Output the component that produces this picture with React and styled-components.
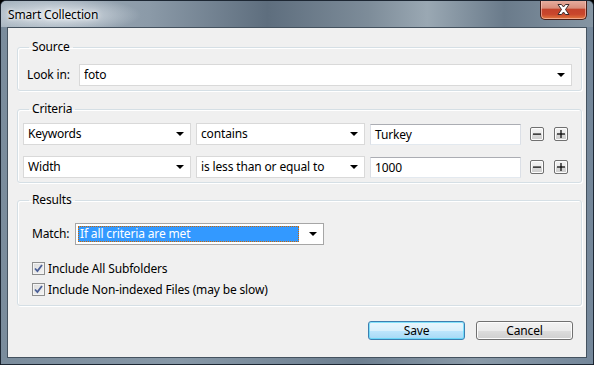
import React from "react";
import styled, { createGlobalStyle, css } from "styled-components";

const Global = createGlobalStyle`
  html, body { margin: 0; padding: 0; background: #000; }
  body { font-family: "Noto Sans", "Open Sans", sans-serif; font-size: 12px; letter-spacing: -0.15px; color: #000; }
  * { box-sizing: border-box; }
`;

const Window = styled.div`
  width: 594px;
  height: 365px;
  border: 1px solid #1d2733;
  border-radius: 6px 6px 0 0;
  background: linear-gradient(90deg, #7a8c9c 0%, #8798a7 30%, #6d7f90 60%, #8a9aa8 80%, #74879a 100%);
  display: flex;
  flex-direction: column;
  overflow: hidden;
`;

const TitleBar = styled.div`
  height: 26px;
  display: flex;
  align-items: flex-start;
  padding-left: 7px;
  padding-right: 6px;
  background:
    radial-gradient(ellipse 80px 18px at 60px 14px, rgba(235,240,245,0.85), rgba(235,240,245,0) 100%),
    linear-gradient(90deg, #a9b6c1 0%, #8b9aa8 25%, #5e6e7e 45%, #7d8c99 62%, #9aa8b3 72%, #6a7b8b 85%, #8595a3 100%);
`;

const Title = styled.div`
  flex: 1;
  line-height: 28px;
  font-size: 12px;
  color: #000;
  text-shadow: 0 0 6px #fff, 0 0 3px #fff;
`;

const CloseButton = styled.div`
  width: 47px;
  height: 20px;
  margin-top: -1px;
  border: 1px solid #4a1f18;
  border-top: none;
  border-radius: 0 0 5px 5px;
  background: linear-gradient(180deg, #e8b0a2 0%, #d88e7c 42%, #c4432b 50%, #c9462c 75%, #e2793f 100%);
  box-shadow: inset 0 0 0 1px rgba(255, 210, 200, 0.55);
  display: flex;
  align-items: center;
  justify-content: center;
`;

const Client = styled.div`
  flex: 1;
  margin: 0 6px 6px 6px;
  border: 1px solid #44525f;
  background: #f0f0f0;
  display: flex;
  flex-direction: column;
  padding: 0 0 0 9px;
`;

const Group = styled.fieldset`
  margin: ${(p) => p.$top}px 4px 0 0;
  padding: 0;
  min-width: 0;
  border: 1px solid #d5dfe5;
  border-radius: 3px;
  box-shadow: inset 1px 1px 0 #fff, 1px 1px 0 #fff;
`;

const Legend = styled.legend`
  margin-left: 11px;
  padding: 0 3px;
  line-height: 16px;
  font-size: 12px;
  color: #000;
`;

const Body = styled.div`
  padding: ${(p) => p.$pad};
  display: flex;
  flex-direction: column;
  gap: ${(p) => p.$gap || 0}px;
`;

const Row = styled.div`
  display: flex;
  align-items: center;
  gap: ${(p) => p.$gap || 0}px;
`;

const Spacer = styled.div`
  height: ${(p) => p.$h}px;
`;

const Label = styled.span`
  width: ${(p) => p.$w}px;
  flex: none;
  line-height: 16px;
`;

const SelectBox = styled.div`
  width: ${(p) => (p.$w ? `${p.$w}px` : "auto")};
  flex: ${(p) => (p.$w ? "none" : "1")};
  height: 22px;
  background: #fff;
  border: 1px solid ${(p) => (p.$dark ? "#a6a6a6" : "#d9d9d9")};
  display: flex;
  align-items: center;
  padding: 0 6px 0 ${(p) => (p.$dark ? 2 : 4)}px;
  gap: 4px;
`;

const SelectText = styled.div`
  flex: 1;
  white-space: nowrap;
  overflow: hidden;
  line-height: 16px;
  ${(p) =>
    p.$selected &&
    css`
      background: #3399ff;
      color: #fff;
      outline: 1px dotted #cc6600;
      outline-offset: -1px;
      padding-left: 2px;
      margin-right: 6px;
    `}
`;

const Arrow = styled.span`
  width: 0;
  height: 0;
  border-left: 4px solid transparent;
  border-right: 4px solid transparent;
  border-top: 4px solid #000;
  flex: none;
`;

const TextField = styled.div`
  width: ${(p) => p.$w}px;
  height: 21px;
  flex: none;
  background: #fff;
  border: 1px solid #dbdfe6;
  border-top-color: #abadb3;
  border-bottom-color: #e3e9ef;
  padding: 0 4px;
  line-height: 19px;
`;

const MiniButton = styled.div`
  width: 14px;
  height: 14px;
  flex: none;
  border: 1px solid #707070;
  border-radius: 2px;
  background: linear-gradient(180deg, #f4f4f4 0%, #e8e8e8 50%, #d9d9d9 51%, #cdcdcd 100%);
  box-shadow: inset 0 0 0 1px #fcfcfc;
  display: flex;
  align-items: center;
  justify-content: center;
  margin-left: ${(p) => p.$ml}px;
`;

const CheckRow = styled.div`
  height: 21px;
  display: flex;
  align-items: center;
  gap: 3px;
`;

const CheckBox = styled.div`
  width: 13px;
  height: 13px;
  flex: none;
  border: 1px solid #8e8f8f;
  background: linear-gradient(135deg, #dcdcdc 0%, #f4f4f4 100%);
  box-shadow: inset 0 0 0 1px #f4f4f4;
  display: flex;
  align-items: center;
  justify-content: center;
`;

const Footer = styled.div`
  display: flex;
  justify-content: flex-end;
  gap: 11px;
  padding: 15px 13px 0 0;
`;

const Button = styled.div`
  width: 97px;
  height: 19px;
  border-radius: 3px;
  display: flex;
  align-items: center;
  justify-content: center;
  line-height: 16px;
  ${(p) =>
    p.$default
      ? css`
          border: 1px solid #3c7fb1;
          background: linear-gradient(180deg, #eaf6fd 0%, #d9f0fc 50%, #bee6fd 51%, #a7d9f5 100%);
          box-shadow: inset 0 0 0 1px #48d6f8a0;
        `
      : css`
          border: 1px solid #707070;
          background: linear-gradient(180deg, #f2f2f2 0%, #ebebeb 50%, #dddddd 51%, #cfcfcf 100%);
          box-shadow: inset 0 0 0 1px #fcfcfc;
        `}
`;

const CloseIcon = () => (
  <svg width="13" height="11" viewBox="0 0 13 11">
    <path
      d="M1 0.5 H4.5 L6.5 3 L8.5 0.5 H12 L8.5 5.5 L12 10.5 H8.5 L6.5 8 L4.5 10.5 H1 L4.5 5.5 Z"
      fill="#fff"
      stroke="#3a2b2b"
      strokeWidth="1"
      strokeLinejoin="round"
    />
  </svg>
);

const Minus = () => (
  <svg width="10" height="10" viewBox="0 0 10 10">
    <rect x="1" y="4.5" width="8" height="1.2" fill="#000" />
  </svg>
);

const Plus = () => (
  <svg width="10" height="10" viewBox="0 0 10 10">
    <rect x="1" y="4.4" width="8" height="1.2" fill="#000" />
    <rect x="4.4" y="1" width="1.2" height="8" fill="#000" />
  </svg>
);

const Check = () => (
  <svg width="9" height="9" viewBox="0 0 9 9">
    <path d="M1 4.5 L3.4 7 L8 1" fill="none" stroke="#4a5f97" strokeWidth="1.8" />
  </svg>
);

const criteria = [
  { field: "Keywords", op: "contains", value: "Turkey" },
  { field: "Width", op: "is less than or equal to", value: "1000" },
];

export default function App() {
  return (
    <>
      <Global />
      <Window>
        <TitleBar>
          <Title>Smart Collection</Title>
          <CloseButton>
            <CloseIcon />
          </CloseButton>
        </TitleBar>
        <Client>
          <Group $top={11}>
            <Legend>Source</Legend>
            <Body $pad="9px 9px 4px 9px">
              <Row>
                <Label $w={52}>Look in:</Label>
                <SelectBox>
                  <SelectText>foto</SelectText>
                  <Arrow />
                </SelectBox>
              </Row>
            </Body>
          </Group>
          <Group $top={10}>
            <Legend>Criteria</Legend>
            <Body $pad="6px 12px 4px 5px" $gap={11}>
              {criteria.map((c) => (
                <Row key={c.field} $gap={5}>
                  <SelectBox $w={168}>
                    <SelectText>{c.field}</SelectText>
                    <Arrow />
                  </SelectBox>
                  <SelectBox $w={169}>
                    <SelectText>{c.op}</SelectText>
                    <Arrow />
                  </SelectBox>
                  <TextField $w={151}>{c.value}</TextField>
                  <MiniButton $ml={4}>
                    <Minus />
                  </MiniButton>
                  <MiniButton $ml={5}>
                    <Plus />
                  </MiniButton>
                </Row>
              ))}
            </Body>
          </Group>
          <Group $top={9}>
            <Legend>Results</Legend>
            <Body $pad="15px 9px 5px 14px">
              <Row>
                <Label $w={43}>Match:</Label>
                <SelectBox $w={249} $dark>
                  <SelectText $selected>If all criteria are met</SelectText>
                  <Arrow />
                </SelectBox>
              </Row>
              <Spacer $h={13} />
              <CheckRow>
                <CheckBox>
                  <Check />
                </CheckBox>
                <span>Include All Subfolders</span>
              </CheckRow>
              <CheckRow>
                <CheckBox>
                  <Check />
                </CheckBox>
                <span>Include Non-indexed Files (may be slow)</span>
              </CheckRow>
            </Body>
          </Group>
          <Footer>
            <Button $default>Save</Button>
            <Button>Cancel</Button>
          </Footer>
        </Client>
      </Window>
    </>
  );
}
